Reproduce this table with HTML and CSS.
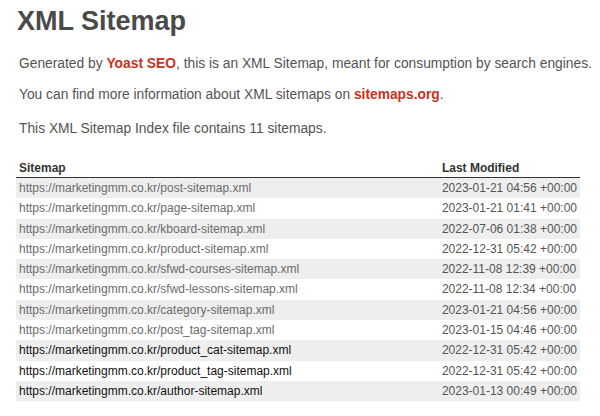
FILE: index.html
```html
<!DOCTYPE html>
<html>
<head>
<meta charset="utf-8">
<link rel="stylesheet" href="styles.css">
</head>
<body>
<div class="page">
  <h1 class="title">XML Sitemap</h1>
  <p class="desc first">Generated by <a class="brand" href="#">Yoast SEO</a>, this is an XML Sitemap, meant for consumption by search engines.</p>
  <p class="desc">You can find more information about XML sitemaps on <a class="brand" href="#">sitemaps.org</a>.</p>
  <p class="desc count">This XML Sitemap Index file contains 11 sitemaps.</p>
  <table class="sitemap">
    <thead>
      <tr><th class="col-url">Sitemap</th><th class="col-date">Last Modified</th></tr>
    </thead>
    <tbody>
      <tr class="alt"><td><a class="visited" href="#">https://marketingmm.co.kr/post-sitemap.xml</a></td><td class="date">2023-01-21 04:56 +00:00</td></tr>
      <tr><td><a class="visited" href="#">https://marketingmm.co.kr/page-sitemap.xml</a></td><td class="date">2023-01-21 01:41 +00:00</td></tr>
      <tr class="alt"><td><a class="visited" href="#">https://marketingmm.co.kr/kboard-sitemap.xml</a></td><td class="date">2022-07-06 01:38 +00:00</td></tr>
      <tr><td><a class="visited" href="#">https://marketingmm.co.kr/product-sitemap.xml</a></td><td class="date">2022-12-31 05:42 +00:00</td></tr>
      <tr class="alt"><td><a class="visited" href="#">https://marketingmm.co.kr/sfwd-courses-sitemap.xml</a></td><td class="date">2022-11-08 12:39 +00:00</td></tr>
      <tr><td><a class="visited" href="#">https://marketingmm.co.kr/sfwd-lessons-sitemap.xml</a></td><td class="date">2022-11-08 12:34 +00:00</td></tr>
      <tr class="alt"><td><a class="visited" href="#">https://marketingmm.co.kr/category-sitemap.xml</a></td><td class="date">2023-01-21 04:56 +00:00</td></tr>
      <tr><td><a class="visited" href="#">https://marketingmm.co.kr/post_tag-sitemap.xml</a></td><td class="date">2023-01-15 04:46 +00:00</td></tr>
      <tr class="alt"><td><a class="link" href="#">https://marketingmm.co.kr/product_cat-sitemap.xml</a></td><td class="date">2022-12-31 05:42 +00:00</td></tr>
      <tr><td><a class="link" href="#">https://marketingmm.co.kr/product_tag-sitemap.xml</a></td><td class="date">2022-12-31 05:42 +00:00</td></tr>
      <tr class="alt"><td><a class="link" href="#">https://marketingmm.co.kr/author-sitemap.xml</a></td><td class="date">2023-01-13 00:49 +00:00</td></tr>
    </tbody>
  </table>
</div>
</body>
</html>
```

FILE: styles.css
```css
html, body {
  margin: 0;
  padding: 0;
  background: #fff;
}
body {
  font-family: "Liberation Sans", Arial, sans-serif;
  color: #545353;
}
.page {
  padding: 5px 12px 0 16px;
}
.title {
  font-size: 27px;
  font-weight: bold;
  color: #4a4a4a;
  margin: 0 0 0 1px;
  line-height: 32px;
}
.desc {
  font-size: 13.8px;
  line-height: 17px;
  margin: 0 0 14px 3px;
  white-space: nowrap;
}
.desc.first {
  margin-top: 18px;
}
.count {
  margin-top: 17px;
  margin-bottom: 0;
}
.brand {
  color: #c7331e;
  font-weight: bold;
  text-decoration: none;
}
.sitemap {
  margin-top: 24px;
  width: 564px;
  border-collapse: collapse;
  font-size: 12px;
}
.sitemap th {
  text-align: left;
  font-weight: bold;
  color: #333;
  padding: 0 3px 2px;
  border-bottom: 1px solid #333;
  line-height: 14px;
}
.sitemap td {
  padding: 2px 3px;
  line-height: 16.3px;
  white-space: nowrap;
}
.sitemap .col-date {
  width: 134px;
}
.alt td {
  background: #eeeeee;
}
.visited {
  color: #6b6b6b;
  text-decoration: none;
}
.link {
  color: #111;
  text-decoration: none;
}
.date {
  color: #555;
}
```
